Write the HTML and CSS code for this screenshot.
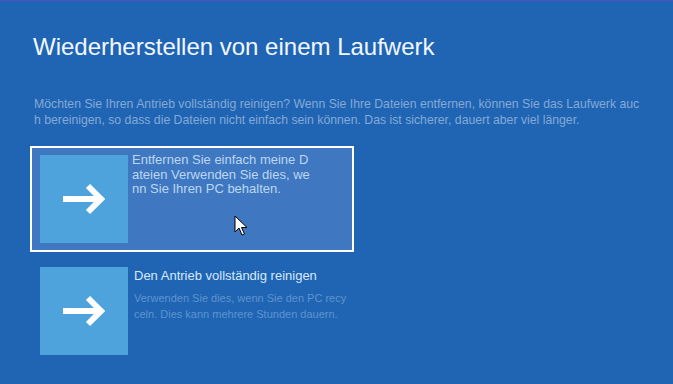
FILE: index.html
```html
<!DOCTYPE html>
<html lang="de">
<head>
    <meta charset="UTF-8">
    <meta name="viewport" content="width=device-width, initial-scale=1.0">
    <title>Wiederherstellen von einem Laufwerk</title>
    <link rel="stylesheet" href="styles.css">
</head>
<body>
    <main class="page">
        <h1 class="title">Wiederherstellen von einem Laufwerk</h1>
        <p class="intro">Möchten Sie Ihren Antrieb vollständig reinigen? Wenn Sie Ihre Dateien entfernen, können Sie das Laufwerk auch bereinigen, so dass die Dateien nicht einfach sein können. Das ist sicherer, dauert aber viel länger.</p>
        <div class="options">
            <a href="#" class="option selected">
                <span class="option-icon">
                    <svg width="44" height="32" viewBox="0 0 44 32"><path d="M0 16H38M25 3L38 16L25 29" fill="none" stroke="#fff" stroke-width="6"/></svg>
                </span>
                <span class="option-text first">Entfernen Sie einfach meine Dateien Verwenden Sie dies, wenn Sie Ihren PC behalten.</span>
                <svg class="cursor" width="14" height="22" viewBox="0 0 14 22"><path d="M1 1V17L5 13L8 20L10.5 19L7.5 12.5H13Z" fill="#fff" stroke="#000" stroke-width="1"/></svg>
            </a>
            <a href="#" class="option">
                <span class="option-icon">
                    <svg width="44" height="32" viewBox="0 0 44 32"><path d="M0 16H38M25 3L38 16L25 29" fill="none" stroke="#fff" stroke-width="6"/></svg>
                </span>
                <span class="option-body">
                    <span class="option-title">Den Antrieb vollständig reinigen</span>
                    <span class="option-desc">Verwenden Sie dies, wenn Sie den PC recyceln. Dies kann mehrere Stunden dauern.</span>
                </span>
            </a>
        </div>
    </main>
</body>
</html>
```

FILE: styles.css
```css
body { margin: 0; background-color: #2065b3; border-top: 1px solid #4b52c4; font-family: "Liberation Sans", Arial, sans-serif; color: #ffffff; height: 383px; overflow: hidden; }
.page { padding: 32px 0 0 30px; }
.title { margin: 0 0 0 3px; font-family: "Liberation Sans Narrow", "Liberation Sans", sans-serif; font-weight: normal; font-size: 24px; line-height: 28px; color: #f2f7ff; }
.intro { margin: 35px 0 0 4px; width: 610px; font-size: 12.25px; line-height: 16px; color: #84a9d6; word-break: break-all; }
.options { display: flex; flex-direction: column; gap: 6px; margin-top: 18px; }
.option { position: relative; display: flex; align-items: flex-start; gap: 4px; width: 304px; height: 88px; padding: 7px 8px; border: 2px solid transparent; text-decoration: none; }
.option.selected { background-color: #3f78c0; border-color: #ffffff; }
.option-icon { flex: 0 0 88px; height: 88px; background-color: #4ea3dc; display: flex; align-items: center; justify-content: center; }
.option-icon svg { margin-left: 2px; }
.option-text { font-size: 13px; line-height: 14.5px; color: #bcd6f2; word-break: break-all; }
.option-text.first { width: 180px; margin-top: -2px; }
.option-body { display: flex; flex-direction: column; margin-left: 2px; }
.option-title { font-size: 13px; line-height: 16px; color: #d6e8fb; margin-top: 1px; }
.option-desc { width: 216px; margin-top: 6px; font-size: 11px; line-height: 16px; color: #5e93cf; word-break: break-all; }
.cursor { position: absolute; left: 202px; top: 67px; }
```
